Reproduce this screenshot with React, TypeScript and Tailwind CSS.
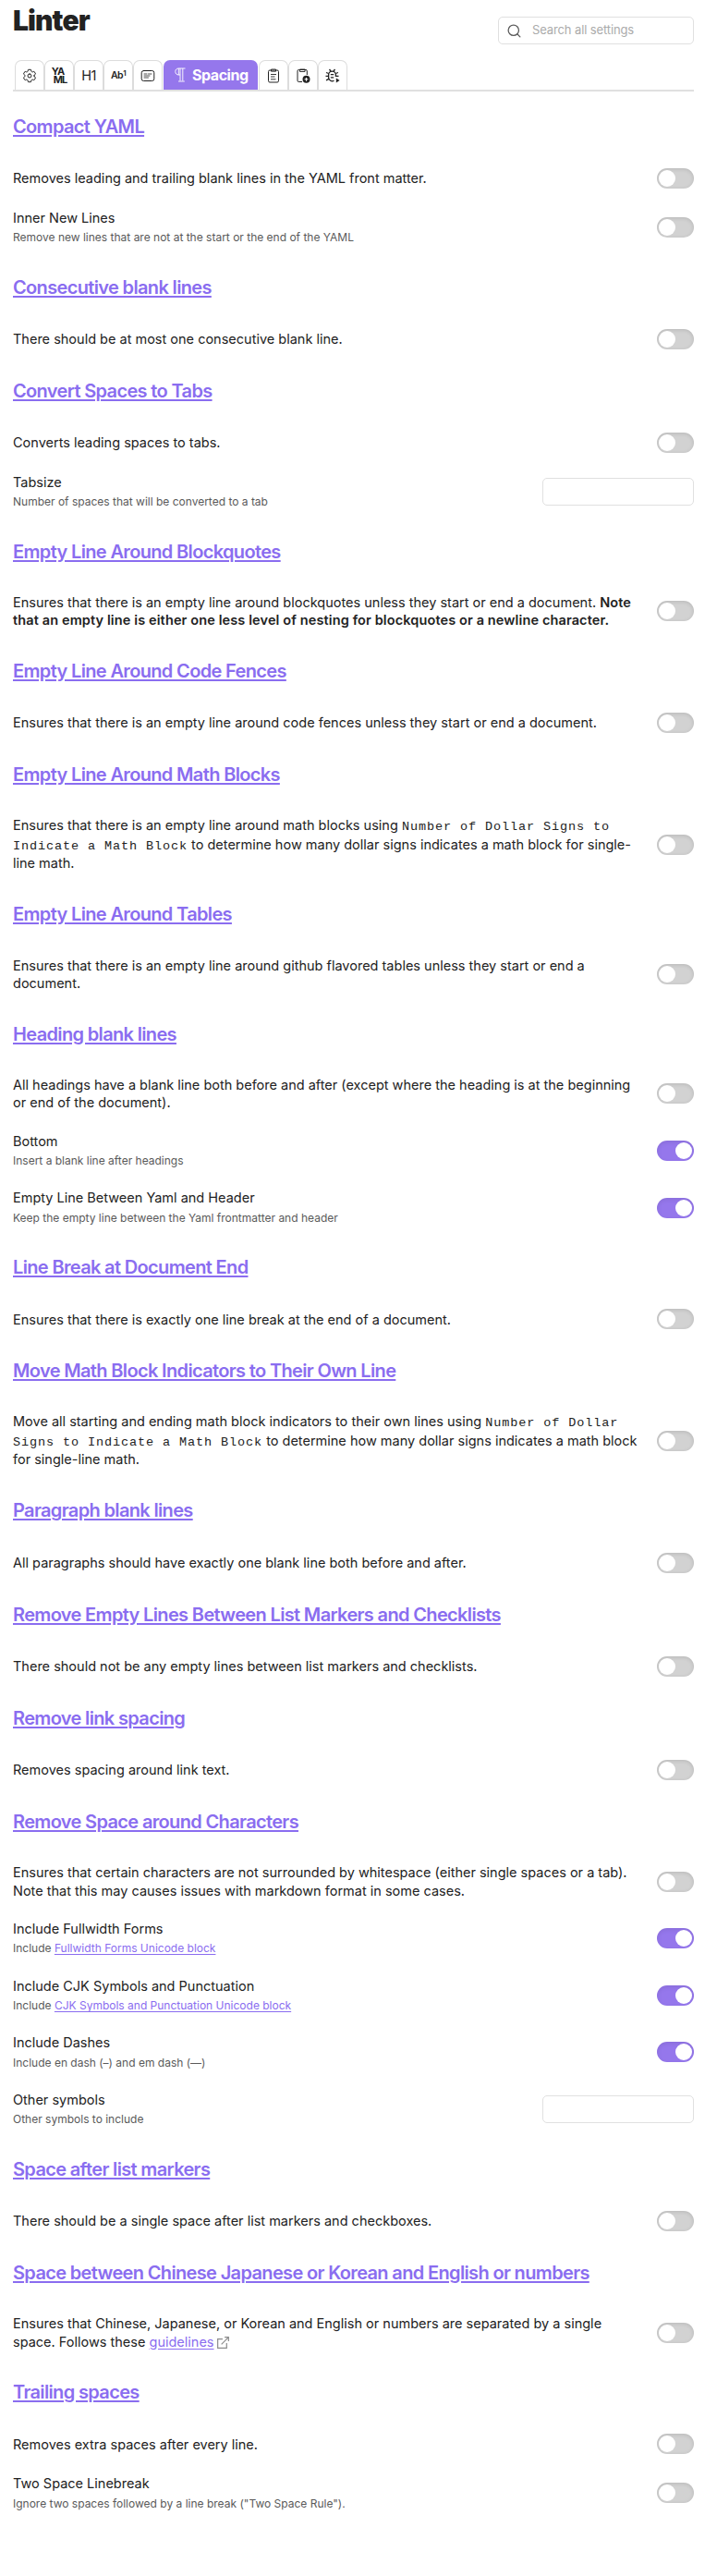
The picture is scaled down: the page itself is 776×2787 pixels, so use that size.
import React from "react";
import { Search } from "lucide-react";
import { IoSettingsOutline } from "react-icons/io5";

function Toggle({ on = false }: { on?: boolean }) {
  return (
    <div
      className={
        on
          ? "flex h-[22px] w-10 shrink-0 items-center justify-end rounded-full bg-[#9577ec] p-0.5 inset-shadow-[0_2px_5px_rgba(0,0,0,0.08)]"
          : "flex h-[22px] w-10 shrink-0 items-center rounded-full bg-[#d2d2d2] p-0.5 inset-shadow-[0_1px_4px_rgba(0,0,0,0.13)]"
      }
    >
      <div className="size-[18px] rounded-full bg-white" />
    </div>
  );
}

function Field() {
  return <div className="h-[30px] w-[164px] shrink-0 rounded-[5px] border border-[#e0e0e0] bg-white" />;
}

function Option({ name, desc, on, field }: { name: string; desc: React.ReactNode; on?: boolean; field?: boolean }) {
  return (
    <div className="flex h-[61.6px] items-center justify-between">
      <div>
        <div className="text-[14.5px] leading-[19.5px]">{name}</div>
        <div className="pt-[3px] text-[12px] leading-[18px] text-[#5a5a5a]">{desc}</div>
      </div>
      {field ? <Field /> : <Toggle on={on} />}
    </div>
  );
}

function Section({ title, body, size = one, children }: { title: string; body: React.ReactNode; size?: string; children?: React.ReactNode }) {
  return (
    <section>
      <h2 className="h-[68px] pt-[21px] text-[20px] leading-[26px] font-semibold tracking-[-0.65px] whitespace-nowrap text-[#8a6df0]">
        <a className="underline decoration-2 underline-offset-2">{title}</a>
      </h2>
      <div className={"flex items-center justify-between text-[14.5px] " + size}>
        <div className="w-[681px]">{body}</div>
        <Toggle />
      </div>
      {children}
    </section>
  );
}

const one = "h-[44.2px] leading-[19.5px]";
const two = "h-[61.4px] leading-[19.5px]";
const three = "h-[83px] leading-[20.4px]";

const Code = ({ children }: { children: React.ReactNode }) => (
  <code className="font-['Liberation_Mono',monospace] text-[13.5px] leading-none tracking-[0.9px]">{children}</code>
);
const Link = ({ children }: { children: React.ReactNode }) => (
  <a className="text-[#8a6df0] underline underline-offset-2">{children}</a>
);

function Tab({ children }: { children: React.ReactNode }) {
  return (
    <div className="flex h-8 w-8 items-center justify-center rounded-t-[7px] border border-b-0 border-[#dcdcdc] text-[#222]">
      {children}
    </div>
  );
}

function CommentIcon() {
  return (
    <svg width="16" height="16" viewBox="0 0 16 16" fill="none" stroke="currentColor" strokeLinecap="round">
      <rect x="1.2" y="2.5" width="13.6" height="11" rx="2.2" strokeWidth="1" />
      <path d="M4 6h3M8.5 6h3.5M4 8h6M4 10h4.5" strokeWidth="0.8" />
    </svg>
  );
}

function PilcrowIcon() {
  return (
    <svg width="12" height="16" viewBox="0 0 12 16" fill="none" stroke="white" strokeWidth="0.9">
      <path d="M11.5 1H4.2C2 1 .8 2.5.8 4.5S2.2 8 4.3 8H6M6 1v13.5M8.8 1v13.5M4 15h6.8M4.3 1v7" />
    </svg>
  );
}

function ClipboardIcon() {
  return (
    <svg width="16" height="16" viewBox="0 0 16 16" fill="none" stroke="currentColor">
      <rect x="2.5" y="2" width="11" height="13" rx="1.5" strokeWidth="1" />
      <path d="M5.5 1h5v2.2h-5z" strokeWidth="0.9" />
      <path d="M5 6.5h6M5 9h4.5M5 11.8h5.5" strokeWidth="0.9" />
    </svg>
  );
}

function ClipboardAddIcon() {
  return (
    <svg width="16" height="16" viewBox="0 0 16 16" fill="none" stroke="currentColor">
      <path d="M7 14.5H3.3A1.3 1.3 0 0 1 2 13.2V2.8A1.3 1.3 0 0 1 3.3 1.5H11A1.3 1.3 0 0 1 12.3 2.8V7" strokeWidth="1" />
      <path d="M4.5 1v2.500h5.500V1z" strokeWidth="0.9" />
      <circle cx="11.5" cy="11.8" r="4" fill="currentColor" stroke="none" />
      <path d="M11.5 9.900v3.800M9.600 11.800h3.800" stroke="white" strokeWidth="1.1" />
    </svg>
  );
}

function BugPlayIcon() {
  return (
    <svg width="16" height="16" viewBox="0 0 16 16" fill="none" stroke="currentColor" strokeWidth="1.3">
      <path d="M9.5 13.2A3.9 3.9 0 0 1 3.6 10V7a3.9 3.9 0 0 1 7.8 0v2" />
      <path d="M4.5 1l1.5 2M10.5 1L9 3M1 4.5l2.7 1M14 4.5l-2.7 1M.5 8.3h3M11.5 8.3h3M1 12.8l3-1.5M5.8 6.7h3.4M5.8 9.8h3.4" />
      <path d="M11.8 10.500l3.800 2.500-3.800 2.500z" fill="currentColor" stroke="none" />
    </svg>
  );
}

function ExternalIcon() {
  return (
    <svg className="ml-[3px] inline-block align-[-2px]" width="13" height="13" viewBox="0 0 12 12" fill="none" stroke="#8c8c8c" strokeWidth="1.1">
      <path d="M5.5 2.5H.6V11.4H9.5V6.5M7.5.6H11.4V4.5M11.2.8L4.3 7.7" />
    </svg>
  );
}

export default function App() {
  return (
    <div className="h-[2787px] bg-white pr-[25px] pl-[14px] font-['Inter',sans-serif] text-[#222]">
      <header className="flex h-[65px] justify-between">
        <h1 className="pt-1 text-[30px] leading-9 font-black tracking-[-0.9px]">Linter</h1>
        <div className="mt-[18px] flex h-[30px] w-[212px] items-center gap-[11px] rounded-[5px] border border-[#e0e0e0] px-2 text-[13px] tracking-[-0.12px] text-[#ababab]">
          <Search size={17} color="#5a5a5a" strokeWidth={1.8} />
          Search all settings
        </div>
      </header>
      <nav className="flex h-[34px] border-b-2 border-[#e0e0e0] pl-[2px]">
        <Tab><IoSettingsOutline size={16} /></Tab>
        <Tab>
          <div className="text-[11px] leading-[8.5px] font-bold tracking-[-0.9px]">
            <div>YA</div>
            <div className="pl-[2px]">ML</div>
          </div>
        </Tab>
        <Tab><span className="text-[14.5px] tracking-[-0.5px]">H1</span></Tab>
        <Tab>
          <span className="flex items-start text-[10.5px] leading-[12px] font-semibold tracking-[-0.5px]">
            Ab<span className="text-[8px] leading-[7px]">1</span>
          </span>
        </Tab>
        <Tab><CommentIcon /></Tab>
        <div className="mx-px flex h-8 w-[102px] items-center gap-[7px] rounded-t-[7px] bg-[#9577ec] pl-3 text-[16px] font-bold tracking-[-0.45px] text-white">
          <PilcrowIcon />
          Spacing
        </div>
        <Tab><ClipboardIcon /></Tab>
        <Tab><ClipboardAddIcon /></Tab>
        <Tab><BugPlayIcon /></Tab>
      </nav>
      <main className="pt-1">
        <Section title="Compact YAML" body="Removes leading and trailing blank lines in the YAML front matter.">
          <Option name="Inner New Lines" desc="Remove new lines that are not at the start or the end of the YAML" />
        </Section>
        <Section title="Consecutive blank lines" body="There should be at most one consecutive blank line." />
        <Section title="Convert Spaces to Tabs" body="Converts leading spaces to tabs.">
          <Option name="Tabsize" desc="Number of spaces that will be converted to a tab" field />
        </Section>
        <Section
          title="Empty Line Around Blockquotes"
          size={two}
          body={<>Ensures that there is an empty line around blockquotes unless they start or end a document. <strong className="font-semibold tracking-[0.12px]">Note that an empty line is either one less level of nesting for blockquotes or a newline character.</strong></>}
        />
        <Section title="Empty Line Around Code Fences" body="Ensures that there is an empty line around code fences unless they start or end a document." />
        <Section
          title="Empty Line Around Math Blocks"
          size={three}
          body={<>Ensures that there is an empty line around math blocks using <Code>Number of Dollar Signs to Indicate a Math Block</Code> to determine how many dollar signs indicates a math block for single-line math.</>}
        />
        <Section title="Empty Line Around Tables" size={two} body="Ensures that there is an empty line around github flavored tables unless they start or end a document." />
        <Section title="Heading blank lines" size={two} body="All headings have a blank line both before and after (except where the heading is at the beginning or end of the document).">
          <Option name="Bottom" desc="Insert a blank line after headings" on />
          <Option name="Empty Line Between Yaml and Header" desc="Keep the empty line between the Yaml frontmatter and header" on />
        </Section>
        <Section title="Line Break at Document End" body="Ensures that there is exactly one line break at the end of a document." />
        <Section
          title="Move Math Block Indicators to Their Own Line"
          size={three}
          body={<>Move all starting and ending math block indicators to their own lines using <Code>Number of Dollar Signs to Indicate a Math Block</Code> to determine how many dollar signs indicates a math block for single-line math.</>}
        />
        <Section title="Paragraph blank lines" body="All paragraphs should have exactly one blank line both before and after." />
        <Section title="Remove Empty Lines Between List Markers and Checklists" body="There should not be any empty lines between list markers and checklists." />
        <Section title="Remove link spacing" body="Removes spacing around link text." />
        <Section
          title="Remove Space around Characters"
          size={two}
          body="Ensures that certain characters are not surrounded by whitespace (either single spaces or a tab). Note that this may causes issues with markdown format in some cases."
        >
          <Option name="Include Fullwidth Forms" desc={<>Include <Link>Fullwidth Forms Unicode block</Link></>} on />
          <Option name="Include CJK Symbols and Punctuation" desc={<>Include <Link>CJK Symbols and Punctuation Unicode block</Link></>} on />
          <Option name="Include Dashes" desc="Include en dash (–) and em dash (—)" on />
          <Option name="Other symbols" desc="Other symbols to include" field />
        </Section>
        <Section title="Space after list markers" body="There should be a single space after list markers and checkboxes." />
        <Section
          title="Space between Chinese Japanese or Korean and English or numbers"
          size={two}
          body={<>Ensures that Chinese, Japanese, or Korean and English or numbers are separated by a single space. Follows these <Link>guidelines</Link><ExternalIcon /></>}
        />
        <Section title="Trailing spaces" body="Removes extra spaces after every line.">
          <Option name="Two Space Linebreak" desc={'Ignore two spaces followed by a line break ("Two Space Rule").'} />
        </Section>
      </main>
    </div>
  );
}
